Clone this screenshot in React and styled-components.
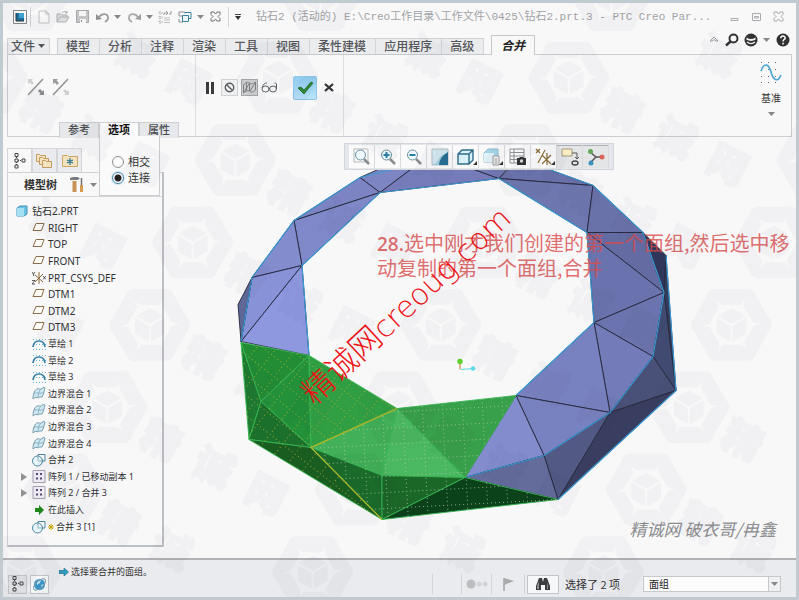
import React, { useState } from "react";
import styled, { createGlobalStyle, css } from "styled-components";

const Global = createGlobalStyle`
  * { box-sizing: border-box; }
  body { margin: 0; font-family: "Noto Sans CJK SC", "Noto Sans", sans-serif; font-size: 12px; color: #333; }
  button { font: inherit; color: inherit; margin: 0; padding: 0; border: 0; background: none; }
  svg { display: block; flex: none; }
`;

/* ---------- window frame ---------- */
const Frame = styled.div`
  position: relative;
  min-height: 100vh;
  display: flex;
  flex-direction: column;
  border: 3px solid #c2cad1;
  background: #f8f8f9;
  overflow: hidden;
`;
const TitleBar = styled.header`
  display: flex;
  align-items: center;
  height: 27px;
  padding: 0 8px 0 10px;
`;
const IconButton = styled.button`
  display: flex;
  align-items: center;
  justify-content: center;
  width: ${(p) => p.$w || 19}px;
  height: 18px;
`;
const Separator = styled.span`
  width: 1px;
  height: ${(p) => p.$h || 20}px;
  margin: 0 3px;
  background: #d2d4d7;
`;
const Title = styled.h1`
  flex: 1;
  min-width: 0;
  margin: 0 0 0 13px;
  font: 11px/18px "Liberation Mono", "Noto Sans CJK SC", monospace;
  color: #a0a2a5;
  white-space: nowrap;
  overflow: hidden;
`;
const WindowButtons = styled.div`
  display: flex;
  gap: 3px;
`;

/* ---------- ribbon ---------- */
const TabRow = styled.nav`
  display: flex;
  align-items: flex-end;
  height: 25px;
  padding: 0 4px;
  position: relative;
  z-index: 1;
`;
const TabGroup = styled.div`
  display: flex;
  border: 1px solid #cfd1d4;
  border-right: 0;
  border-bottom-color: #c6c8cb;
  margin-right: 7px;
  height: 17px;
`;
const Tab = styled.button`
  display: flex;
  align-items: center;
  gap: 3px;
  padding: 0 9px 2px 8px;
  border-right: 1px solid #d3d5d8;
  background: #ebecee;
  color: #55575b;
  font-weight: 500;
  line-height: 13px;
  white-space: nowrap;
  ${(p) => p.$file && css`padding: 0 4px 2px 3px;`}
`;
const ActiveTab = styled.button`
  height: 20px;
  padding: 0 9px 2px;
  border: 1px solid #c6c8cb;
  border-bottom: 0;
  background: #f8f8f9;
  color: #222;
  font-weight: 700;
  font-style: italic;
  line-height: 17px;
`;
const HelpTools = styled.div`
  display: flex;
  align-items: center;
  gap: 1px;
  margin-left: auto;
  align-self: flex-start;
  height: 20px;
`;
const Ribbon = styled.section`
  display: grid;
  grid-template-columns: 188px 148px 1fr;
  height: 83px;
  margin: -1px 4px 0;
  border: 1px solid #cbcdd0;
`;
const Group = styled.div`
  display: flex;
  flex-direction: column;
  border-right: 1px solid ${(p) => (p.$last ? "transparent" : "#dcdee0")};
`;
const ToolRow = styled.div`
  display: flex;
  align-items: center;
  gap: ${(p) => p.$gap || 3}px;
  height: 65px;
  padding-left: ${(p) => p.$left}px;
`;
const SquareButton = styled.button`
  display: flex;
  align-items: center;
  justify-content: center;
  width: 17px;
  height: 17px;
  border: 1px solid ${(p) => (p.$on ? "#a5a7aa" : "#cfd1d3")};
  background: ${(p) => (p.$on ? "#d0d1d2" : "#eff0f1")};
`;
const PlainButton = styled.button`
  display: flex;
  align-items: center;
  justify-content: center;
  min-width: 17px;
  height: 20px;
`;
const OkButton = styled.button`
  display: flex;
  align-items: center;
  justify-content: center;
  width: 24px;
  height: 24px;
  margin-left: 12px;
  border: 1px solid #8fc6ea;
  border-radius: 2px;
  background: linear-gradient(#8fcdf0, #b9e3fa);
`;
const PanelTabs = styled.div`
  display: flex;
  height: 16px;
  margin-left: 51px;
`;
const PanelTabBox = styled.div`
  position: relative;
  width: 40px;
`;
const PanelTab = styled.button`
  width: 100%;
  height: 16px;
  border: 1px solid #cdcfd2;
  border-bottom: 0;
  background: ${(p) => (p.$on ? "#fbfbfc" : "#e6e8eb")};
  color: ${(p) => (p.$on ? "#111" : "#4c4e52")};
  font-size: 11px;
  font-weight: ${(p) => (p.$on ? 700 : 500)};
  line-height: 13px;
  padding-bottom: 2px;
`;
const OptionsPopup = styled.fieldset`
  position: absolute;
  z-index: 3;
  top: 100%;
  left: 0;
  display: grid;
  gap: 1px;
  width: 61px;
  min-width: 0;
  height: 60px;
  align-content: end;
  margin: 0;
  padding: 0 0 10px 12px;
  border: 1px solid #cbcdd0;
  border-top: 0;
  background: #fafafb;
`;
const Option = styled.label`
  display: flex;
  align-items: center;
  gap: 4px;
  font-size: 11px;
  line-height: 15px;
`;
const Radio = styled.input`
  appearance: none;
  width: 12px;
  height: 12px;
  margin: 0;
  border: 1px solid #8b8d90;
  border-radius: 50%;
  background: #fff;
  &:checked {
    border-color: #4d87ad;
    background: radial-gradient(#222 0 3px, #fff 4px);
    box-shadow: 0 0 2px #5ab0e0;
  }
`;
const DatumButton = styled.button`
  display: flex;
  flex-direction: column;
  align-items: center;
  gap: 5px;
  margin: 6px 8px 0 auto;
  font-size: 10px;
  line-height: 18px;
`;

/* ---------- work area ---------- */
const Main = styled.main`
  display: grid;
  grid-template-columns: 157px 1fr;
  flex: 1;
  margin-left: 4px;
`;
const SidePane = styled.aside`
  display: flex;
  flex-direction: column;
  padding: 11px 0 11px;
`;
const PaneTabs = styled.div`
  display: flex;
  height: 24px;
`;
const PaneTab = styled.button`
  display: flex;
  align-items: center;
  justify-content: center;
  width: 25px;
  border: 1px solid #d4d6d9;
  border-bottom: 0;
  background: ${(p) => (p.$on ? "#f8f8f9" : "#e9ebee")};
`;
const TreePane = styled.section`
  display: flex;
  flex-direction: column;
  flex: 1;
  border: 1px solid #cfd1d4;
  border-width: 1px 2px 2px 1px;
  border-right-color: #bcc1c6;
  border-bottom-color: #bcc1c6;
`;
const TreeHeader = styled.div`
  display: flex;
  align-items: center;
  height: 24px;
  padding-left: 16px;
  border-bottom: 1px solid #d4d6d9;
`;
const TreeTitle = styled.h2`
  margin: 0 11px 2px 0;
  font-size: 11px;
  font-weight: 700;
  line-height: 18px;
`;
const Tree = styled.ul`
  display: grid;
  grid-auto-rows: 1fr;
  flex: 1;
  max-height: 333px;
  margin: 6px 0 10px;
  padding: 0;
  list-style: none;
`;
const Node = styled.li`
  display: flex;
  align-items: center;
  gap: ${(p) => (p.$root ? 4 : 2)}px;
  padding-left: ${(p) => (p.$root ? 8 : p.$open ? 12 : 24)}px;
  font: ${(p) => (p.$cjk ? 9 : 10)}px/14px "Noto Sans", "Noto Sans CJK SC", sans-serif;
  color: #303234;
  white-space: nowrap;
`;
const Canvas = styled.section`
  position: relative;
  min-width: 0;
`;
const Scene = styled.svg`
  position: absolute;
  inset: 0;
  width: 100%;
  height: 100%;
`;
const ViewTools = styled.div`
  position: absolute;
  top: 6px;
  left: 180px;
  display: flex;
  padding: 1px 4px;
  border: 1px solid #d3d6da;
  background: #e3e6ea;
`;
const ViewTool = styled.button`
  position: relative;
  display: flex;
  align-items: center;
  justify-content: center;
  width: 26px;
  height: 23px;
  border-right: 1px solid #d8dadd;
  background: ${(p) => (p.$on ? "#e4e5e7" : "#fafafb")};
  box-shadow: ${(p) => (p.$on ? "inset 0 1px 0 #aeb0b3" : "none")};
`;
const MenuMark = styled.span`
  position: absolute;
  right: 1px;
  bottom: 3px;
  border: 2px solid #333;
  border-top-color: transparent;
  border-left-color: transparent;
`;
const Note = styled.p`
  position: absolute;
  top: 93px;
  left: 213px;
  margin: 0;
  font: 400 20px/25px "Noto Sans CJK SC", sans-serif;
  color: #d94a4acc;
  white-space: nowrap;
`;
const NoteNumber = styled.span`
  font: 600 19px/1 "Open Sans", sans-serif;
`;
const SiteMark = styled.p`
  position: absolute;
  top: 149px;
  left: 107px;
  margin: 0;
  font: 200 30px/40px "DejaVu Sans", "Noto Sans CJK SC", sans-serif;
  color: #f01014;
  white-space: nowrap;
  transform: rotate(-43deg);
`;
const SiteName = styled.span`
  font: 300 32px/1 "Noto Sans CJK SC", sans-serif;
`;
const Signature = styled.p`
  position: absolute;
  right: 20px;
  bottom: 17px;
  margin: 0;
  font: italic 17px/24px "Noto Sans CJK SC", sans-serif;
  color: #8c8d8f;
`;

/* ---------- status bar ---------- */
const StatusBar = styled.footer`
  display: grid;
  grid-template-columns: auto 1fr auto auto auto;
  align-items: end;
  height: 39px;
  padding: 0 15px 3px 5px;
  border-top: 2px solid #b0b2b5;
  background: #e9ebee;
`;
const StatusGroup = styled.div`
  display: flex;
  align-items: center;
  gap: 3px;
  height: 20px;
`;
const Indicators = styled(StatusGroup)`
  gap: 0;
`;
const Divided = styled(StatusGroup)`
  justify-content: center;
  width: ${(p) => p.$w}px;
  border-left: 1px solid #d2d4d7;
`;
const StatusButton = styled.button`
  display: flex;
  align-items: center;
  justify-content: center;
  width: ${(p) => p.$w || 19}px;
  height: 19px;
  border: 1px solid #c3c6c9;
  background: ${(p) => (p.$on ? "#dee0e3" : "#f6f7f8")};
`;
const Message = styled.p`
  display: flex;
  align-items: center;
  align-self: start;
  gap: 2px;
  margin: 4px 0 0 10px;
  font-size: 9px;
  line-height: 16px;
  white-space: nowrap;
`;
const Count = styled.span`
  width: 78px;
  margin-left: 5px;
  font-size: 11px;
  line-height: 20px;
  white-space: nowrap;
`;
const FilterBox = styled.div`
  position: relative;
  width: 138px;
  height: 18px;
`;
const Filter = styled.select`
  appearance: none;
  display: block;
  width: 100%;
  height: 16px;
  margin: 0;
  padding: 0 5px;
  border: 1px solid #c6c9cc;
  border-radius: 0;
  background: #fbfbfc;
  color: #222;
  font: 10px/14px "Noto Sans CJK SC", sans-serif;
`;
const FilterArrow = styled.span`
  position: absolute;
  top: 1px;
  right: 1px;
  display: flex;
  align-items: center;
  justify-content: center;
  width: 12px;
  height: 14px;
  border-left: 1px solid #c6c9cc;
  background: #eef0f2;
  pointer-events: none;
`;
const Backdrop = styled.svg`
  position: absolute;
  z-index: 5;
  inset: 0;
  width: 100%;
  height: 100%;
  pointer-events: none;
`;

/* ---------- icons ---------- */
const Svg = ({ w = 16, h = 16, children }) => (
  <svg width={w} height={h} viewBox={`0 0 ${w} ${h}`} fill="none" aria-hidden="true">{children}</svg>
);
const Caret = ({ c = "#85878a" }) => <Svg w={7} h={4}><path d="M0 0h7L3.500 4z" fill={c} /></Svg>;

const AppIcon = () => <Svg w={14} h={14}><path d="M.5.5h13v13H.5z" fill="#fafafa" stroke="#85888b" /><path d="M3 3h8v8H3z" fill="#1f6f9f" /><path d="M6 3h5v5H6z" fill="#42a5d3" /><path d="M3 11V3M3 11h8" stroke="#333" /></Svg>;
const NewIcon = () => <Svg w={12} h={14}><path d="M1 1h7l3 3v9H1zM8 1v3h3" fill="#fbfbfb" stroke="#bfc0c2" /></Svg>;
const OpenIcon = () => <Svg w={14} h={14}><path d="M1 12V4h4l1 1h5v2M1 12l3-5h9l-3 5z" fill="#dcdddf" stroke="#aeb0b2" /><path d="M6 3c2-2 4-2 5 0M11 1v2H9" stroke="#aaa" /></Svg>;
const SaveIcon = () => <Svg w={13} h={13}><path d="M.5.5h12v12H.5z" fill="#c3c5c7" stroke="#a6a8ab" /><path d="M3 1h7v5H3zM4 9h6v4H4z" fill="#f4f4f4" /><path d="M5 10h1v2H5z" fill="#888" /></Svg>;
const UndoIcon = () => <Svg w={14} h={12}><path d="M3 6c3-4 9-4 9 1 0 1-1 3-3 4" stroke="#9a9c9e" strokeWidth="1.800" /><path d="M0 3v6l6-1z" fill="#8f9194" /></Svg>;
const RedoIcon = () => <Svg w={14} h={12}><path d="M11 6C8 2 2 2 2 7c0 1 1 3 3 4" stroke="#a8aaac" strokeWidth="1.800" /><path d="M14 3v6l-6-1z" fill="#9c9ea0" /></Svg>;
const RegenIcon = () => <Svg w={14} h={14}><path d="M1 2h3v2H1zM1 6.500h3v2H1zM1 11h3v2H1z" stroke="#b6b8ba" strokeDasharray="2 1" /><path d="M6 8h6M6 10h6M6 12.500h6" stroke="#c0c1c3" /><path d="M6 5V3h3M8 1l2 2-2 2M13 1v3h-2" stroke="#9b9da0" /></Svg>;
const WindowsIcon = () => <Svg w={14} h={14}><path d="M1 2h6M1 2v4h3M1 9v3h4" stroke="#8d8f92" /><path d="M4.500 5.500h6v6h-6z" fill="#eef8fc" stroke="#3b7f9e" /><path d="M7 3.500v-1h6v6h-2" stroke="#3b7f9e" /></Svg>;
const CrossOutline = ({ c = "#707275" }) => <Svg w={11} h={11}><path d="M1 1h3l1.500 2L7 1h3v2.500l-2 2 2 2V10H7L5.500 8 4 10H1V7.500l2-2-2-2z" stroke={c} /></Svg>;
const MoreIcon = () => <Svg w={8} h={8}><path d="M1 1.500h6" stroke="#444" /><path d="M1 3h6L4 7z" fill="#333" /></Svg>;
const MinIcon = () => <Svg w={9} h={11}><path d="M1 7.500h7v2H1z" stroke="#aaacaf" /></Svg>;
const MaxIcon = () => <Svg w={9} h={9}><path d="M.5 1.500h8v7h-8zM2.500 4.500h4v1.500h-4z" stroke="#aaacaf" /></Svg>;

const ChevronUp = () => <Svg w={10} h={8}><path d="M1 5l4-4 4 4H7L5 3.500 3 5z" stroke="#a2a4a7" /></Svg>;
const SearchIcon = () => <Svg w={14} h={14}><circle cx="8.500" cy="5.500" r="4" stroke="#333" strokeWidth="2" /><path d="M5.500 8.500L1 12.500" stroke="#333" strokeWidth="2.500" /></Svg>;
const FaceIcon = () => <Svg w={14} h={14}><circle cx="7" cy="7" r="6.500" fill="#333" /><path d="M2.500 4.500c3 2 6 2 9 0v2.300c-3 1.500-6 1.500-9 0z" fill="#f2f2f2" /><path d="M3 9c2.500 2 5.500 2 8 0" stroke="#eee" strokeWidth="1.400" /></Svg>;
const HelpIcon = () => <Svg w={14} h={14}><circle cx="7" cy="7" r="6.500" fill="#303133" /><path d="M4.800 5.200c.2-3 4.600-2.600 4.400 0C9.100 6.500 7 6.500 7 8.500M7 9.800v1.600" stroke="#fff" strokeWidth="1.500" /></Svg>;

const FlipIcon = ({ flip }) => <Svg w={19} h={19}><path d="M1 17L16 1" stroke="#929497" strokeWidth="1.600" /><path d="M1 1h5L4.600 2.600 7 5 5 7 2.600 4.600 1 6z" fill={flip ? "#9a9c9e" : "#cfd0d2"} /><path d="M17 17h-5l1.500-1.500L11 13l2-2 2.500 2.500L17 12z" fill={flip ? "#d0d1d3" : "#8a8c8e"} /></Svg>;
const PauseIcon = () => <Svg w={10} h={12}><path d="M1 0h3v12H1zM6 0h3v12H6z" fill="#3a3b3d" /></Svg>;
const BanIcon = () => <Svg w={11} h={11}><circle cx="5.500" cy="5.500" r="4.200" stroke="#5c5e61" strokeWidth="1.400" /><path d="M2.500 2.500l6 6" stroke="#5c5e61" strokeWidth="1.400" /></Svg>;
const MeshIcon = () => <Svg w={15} h={15}><path d="M1.500 5c2-3 4-3 6-2v8c-2-1-4 0-6 2zM7.500 3c2 2 4 0 6-1v8c-2 2-4 3-6 1M2 12L7 4M8 11l5-8M4.500 3v7" stroke="#77797c" strokeWidth=".9" /></Svg>;
const GlassesIcon = () => <Svg w={17} h={11}><ellipse cx="4.500" cy="7" rx="3.500" ry="3" stroke="#5b6264" /><ellipse cx="12" cy="7" rx="3.500" ry="3" stroke="#5b6264" /><path d="M1 6C2 2 4 1 6 1M8 7h1M15.500 7V2c0-1-2-1-2-1" stroke="#5b6264" /></Svg>;
const CheckIcon = () => <Svg w={17} h={13}><path d="M1 7l3-1 3 3 7-8 2 1-9 11z" fill="#2f8a35" stroke="#1d5f28" strokeWidth=".7" /></Svg>;
const CloseBold = () => <Svg w={10} h={9}><path d="M1 1l8 7M9 1L1 8" stroke="#333" strokeWidth="2.300" /></Svg>;
const DatumIcon = () => <Svg w={22} h={23}><path d="M1 1.500h21M1 8.500h21M1 15.500h21M1 21.500h21" stroke="#63656a" strokeDasharray="1 6" /><path d="M1 10C4 1 9 3 11 11s7 11 10 3" stroke="#4ba4d4" strokeWidth="1.600" /></Svg>;

const TreeIcon = ({ c = "#444" }) => <Svg w={12} h={16}><path d="M1 .5h3v3H1zM1 6h3v3H1zM1 12h3v3H1zM8 6h3v3H8z" stroke={c} /><path d="M2.500 4v2M2.500 9v3M4 7.500h4" stroke={c} strokeDasharray="1 1" /></Svg>;
const FoldersIcon = () => <Svg w={17} h={16}>{[[0, 0], [3, 3], [6, 6]].map(([x, y]) => <path key={x} transform={`translate(${x} ${y})`} d="M.5 1.500h3l1 1h5v6h-9z" fill="#f4e3bd" stroke="#c39b5e" />)}</Svg>;
const FavIcon = () => <Svg w={16} h={13}><path d="M.5 1.500h5l1 1h9v10H.5z" fill="#f4e3bd" stroke="#cda66a" /><path d="M8 4v7M5 6l6 3M11 6L5 9" stroke="#2d7793" strokeWidth="1.300" /></Svg>;
const HammerIcon = () => <Svg w={15} h={17}><path d="M1 4V2l3-1h5l2 2-3 1z" fill="#777a7d" /><path d="M3.500 5h4v11h-4z" fill="#c89455" /><path d="M11 9h3v7h-3z" fill="#d59b4f" /><path d="M12.500 2v7" stroke="#6f7275" strokeWidth="1.500" /></Svg>;

const PartIcon = () => <Svg w={12} h={12}><path d="M1 3l3-2h7v8l-3 2H1z" fill="#6cc4e2" stroke="#3c93b5" /><path d="M1 3h7v8H1z" fill="#a6e1f3" /></Svg>;
const PlaneIcon = () => <Svg w={14} h={12}><path d="M4 1.500h8L9.500 8.500H1z" fill="#fffdf8" stroke="#8a6d48" /></Svg>;
const CsysIcon = () => <Svg w={14} h={14}><path d="M7 1v12M3 11L11 3M3 4l8 7" stroke="#8a6a3a" /><path d="M0 1l1.500 2L3 1M1.500 3v2M0 9.500h3l-3 3.500h3M11 5l3 3.500M14 5l-3 3.500" stroke="#333" strokeWidth=".8" /></Svg>;
const SketchIcon = () => <Svg w={14} h={13}><path d="M1 1.500h13M1 6.500h13M1 11.500h13" stroke="#6eb0cf" strokeDasharray="1 2" /><path d="M1 9c1-8 11-8 12 0" stroke="#327fa4" strokeWidth="1.700" /></Svg>;
const BlendIcon = () => <Svg w={14} h={13}><path d="M1 12C1 6 3 3 5 2c2-1 3 1 4 0 1-1 3-2 4-1-1 3-1 6-3 9-2 0-3 0-4 1-1-1-3-1-5 1z" fill="#cfe9f4" stroke="#7c9dac" /><path d="M9 2C7 4 6 7 6 11M2 7c3-3 6 1 10-2" stroke="#8fb1c0" /></Svg>;
const MergeIcon = () => <Svg w={14} h={14}><path d="M6 5V1.500h7V8H9.500" stroke="#4c88a3" /><circle cx="5.500" cy="8" r="5" fill="#dff1f8" fillOpacity=".6" stroke="#4c88a3" /><path d="M6 4v4h4" stroke="#8db7c8" /></Svg>;
const PatternIcon = () => <Svg w={14} h={14}><path d="M1 .5h12v12H1z" fill="#f3f0f8" stroke="#aaa3b5" /><path d="M4 3h2v2H4zM8 3h2v2H8zM4 7.500h2v2H4zM8 7.500h2v2H8z" fill="#5a4a78" /></Svg>;
const InsertIcon = () => <Svg w={14} h={12}><path d="M3 4h4V1l5 5-5 5V8H3z" fill="#1f8a1b" /></Svg>;
const SparkIcon = () => <Svg w={6} h={8}><path d="M3 1v6M0 4h6M1 2l4 4M5 2L1 6" stroke="#c2a500" /></Svg>;
const Expander = () => <Svg w={10} h={8}><path d="M1 0l6 4-6 4z" fill="#8e9093" /></Svg>;

const Lens = ({ children }) => <><circle cx="7.500" cy="7" r="5" fill="#eef9fd" stroke="#6b8f9e" /><path d="M11 11l5 5" stroke="#8a8d90" strokeWidth="2.500" />{children}</>;
const FitIcon = () => <Svg w={18} h={18}><path d="M1 1h14v13H1z" stroke="#b4b7ba" /><Lens /></Svg>;
const ZoomInIcon = () => <Svg w={18} h={18}><Lens><path d="M4.500 7h6M7.500 4v6" stroke="#2b7fa6" strokeWidth="2" /></Lens></Svg>;
const ZoomOutIcon = () => <Svg w={18} h={18}><Lens><path d="M4.500 7h6" stroke="#2b7fa6" strokeWidth="2" /></Lens></Svg>;
const RepaintIcon = () => <Svg w={18} h={18}><path d="M1 1h16v16H1z" fill="#d3e8f0" stroke="#b3c0c6" /><path d="M17 4v13H7c0-7 4-9 10-13z" fill="#286f93" /><path d="M1 17c7-1 6-10 15-12-4 2-7 5-8 12z" fill="#9fcfe0" /></Svg>;
const BoxIcon = () => <Svg w={18} h={18}><path d="M1 6l4-4h11v10l-4 4H1zM1 6h11v10M12 6l4-4" fill="#d8f0f8" stroke="#2e6c89" strokeWidth="1.400" /></Svg>;
const ViewsIcon = () => <Svg w={18} h={18}><path d="M1 5l4-4h10v9l-4 4H1z" fill="#a3d7e9" stroke="#90bccc" /><path d="M1 5h10v9H1z" fill="#e3f4fa" /><path d="M10 8h6v9h-6z" fill="#fafafa" stroke="#999" /><path d="M11.500 11h3M11.500 13h3M11.500 15h3" stroke="#999" /></Svg>;
const TableCamIcon = () => <Svg w={18} h={18}><path d="M1 1h14v14H1zM1 4.500h14M1 8h14M1 11.500h14M5 1v14" stroke="#909295" /><path d="M8 10h2l1-1h3l1 1h2v7H8z" fill="#333" /><circle cx="12.500" cy="13" r="1.700" fill="#ddd" /></Svg>;
const DatumShowIcon = () => <Svg w={18} h={18}><path d="M1 1l4 4M5 1L1 5M3 15L10 2M12 5v12M7 16l9-9M7 7l9 9" stroke="#8a6b38" strokeWidth="1.200" /></Svg>;
const AnnotIcon = () => <Svg w={18} h={18}><path d="M1 1h10v7H1z" fill="#faedc5" stroke="#a59878" /><path d="M11 5h5v6M14 9l2 2 2-2" stroke="#555" /><ellipse cx="14" cy="15" rx="3" ry="2" stroke="#444" strokeWidth="1.300" /></Svg>;
const SpinIcon = () => <Svg w={18} h={18}><path d="M3 4l6 5h6M9 9l-5 5" stroke="#555" strokeWidth="1.500" /><circle cx="3.500" cy="3.500" r="2.500" fill="#64a857" /><circle cx="15" cy="9" r="2.500" fill="#d9635a" /><circle cx="4" cy="15" r="2.500" fill="#3c93b9" /></Svg>;

const ArrowIcon = () => <Svg w={10} h={10}><path d="M0 3.500h5V1l4.500 4L5 9V6.500H0z" fill="#2f9bc1" stroke="#1c6785" strokeWidth=".6" /></Svg>;
const GlobeIcon = () => <Svg w={15} h={15}><circle cx="7.500" cy="7.500" r="5.500" fill="#3a97cb" /><path d="M5 4l4-1-1 3-3 2zM9 8l3-1-2 4z" fill="#bfe3f3" /><ellipse cx="7.500" cy="7.500" rx="7.500" ry="3.500" transform="rotate(-42 7.500 7.500)" stroke="#7896a4" /></Svg>;
const BinocularsIcon = () => <Svg w={16} h={14}><path d="M4 1h3l1 4 1-4h3l3 8v4h-5V8H6v5H1V9z" fill="#3c3d3f" /><path d="M2 9l2-5v8H2zM12 5l1 4v3h-1z" fill="#8d9093" /></Svg>;
const DotsIcon = () => <Svg w={22} h={10}><circle cx="5" cy="5" r="4.500" fill="#bcbec0" /><circle cx="13" cy="5" r="2.500" fill="#d3d4d6" /><circle cx="19" cy="5" r="2.500" fill="#d3d4d6" /></Svg>;
const FlagIcon = () => <Svg w={11} h={13}><path d="M1 0v13" stroke="#a2a4a6" strokeWidth="1.500" /><path d="M1 0l10 3-10 4z" fill="#a9abad" /></Svg>;

/* ---------- model geometry ---------- */
const blueFaces = [
  ["360,178 378,170 420,163 380,193", "#7d85c2"],
  ["380,193 420,163 474,170 499,179", "#757cb9"],
  ["474,170 420,163 510,166 499,179", "#7178b3"],
  ["499,179 510,168 549,170 593,186", "#6b72ab"],
  ["499,179 593,186 587,233", "#6f77b0"],
  ["593,186 643,233 587,233", "#6a72aa"],
  ["360,178 380,193 294,221", "#7c84c4"],
  ["294,221 380,193 302,266", "#7f88c9"],
  ["294,221 302,266 252,278", "#838dce"],
  ["252,278 302,266 241,342", "#8892d6"],
  ["302,266 309,356 241,342", "#8e98df"],
  ["252,278 238,305 241,342", "#5e6796"],
  ["587,233 643,233 664,293", "#636ba2"],
  ["587,233 664,293 594,323", "#6b73ae"],
  ["594,323 664,293 653,357", "#6c74af"],
  ["594,323 653,357 610,413", "#737bb8"],
  ["516,396 594,323 610,413", "#7982c0"],
  ["516,396 610,413 544,456", "#7982c0"],
  ["516,396 544,456 465,478", "#838ccd"],
  ["643,233 666,256 664,293", "#30365a"],
  ["664,293 666,256 676,391", "#343c5b"],
  ["664,293 676,391 653,357", "#414a70"],
  ["653,357 676,391 610,413", "#4a5179"],
  ["610,413 676,391 558,500", "#393e60"],
  ["544,456 610,413 558,500", "#525985"],
  ["465,478 544,456 558,500", "#646c9c"],
];
const greenFaces = [
  ["241,343 261,402 249,440", "#1e7a31", "y"],
  ["241,343 309,356 261,402", "#228d35", "y"],
  ["309,356 311,448 261,402", "#22913a", "y"],
  ["261,402 311,448 249,440", "#1b702c", "y"],
  ["249,440 311,448 382,520", "#195e20", "y"],
  ["309,356 397,409 311,448", "#309f43", "y"],
  ["311,448 397,409 382,476", "#42b058", "w"],
  ["397,409 465,478 382,476", "#4ab761", "w"],
  ["397,409 516,396 465,478", "#389f4b", "w"],
  ["311,448 382,476 382,520", "#1b6c2a", "w"],
  ["382,476 465,478 382,520", "#1a6728", "w"],
  ["465,478 558,500 382,520", "#0c4219", "w"],
];

const Model = () => (
  <Scene viewBox="164 138 632 420" role="img" aria-label="Model">
    <defs>
      <pattern id="y" width="16" height="16" patternUnits="userSpaceOnUse" patternTransform="rotate(38)">
        <path d="M0 .5h16M.5 0v16" stroke="#c4b62e" strokeDasharray="1 3" fill="none" />
      </pattern>
      <pattern id="w" width="20" height="16" patternUnits="userSpaceOnUse" patternTransform="rotate(-3)">
        <path d="M0 .5h20M.5 0v16" stroke="#bccdae" strokeDasharray="1 3" fill="none" />
      </pattern>
    </defs>
    {blueFaces.map(([pts, fill]) => <polygon key={pts} points={pts} fill={fill} stroke="#25273c" strokeWidth=".9" />)}
    <g fill="none" stroke="#3a9ad4" strokeWidth="1.200">
      <path d="M549 170L593 186 643 233 664 293 653 357 610 413 544 456 465 478" />
      <path d="M420 163L360 178 294 221 252 278 241 342M309 356L302 266 380 193 499 179 587 233 594 323 516 396" />
      <path d="M666 256L676 391 558 500" />
    </g>
    {greenFaces.map(([pts, fill, grid]) => (
      <g key={pts}>
        <polygon points={pts} fill={fill} stroke="#37b552" strokeWidth=".9" />
        <polygon points={pts} fill={`url(#${grid})`} opacity=".75" />
      </g>
    ))}
    <path d="M397 409L311 448 382 520" fill="none" stroke="#a5b52e" strokeWidth="1.400" />
    <path d="M460 363v7" stroke="#c07b2d" />
    <path d="M461 370l12-1" stroke="#55dbe9" />
    <circle cx="460" cy="362" r="2.700" fill="#5fd32b" />
    <circle cx="473" cy="369" r="2.200" fill="#58dcec" />
  </Scene>
);

const marks = [-1, 0, 1, 2].flatMap((col) =>
  [-4, -3, -2, -1, 0, 1, 2, 3].map((row) => [148 + col * 293 - row * 43, 325 + row * 83])
);
const glyphs = marks.flatMap(([x, y]) =>
  ["精", "诚", "网"].map((g, i) => [g, x + 54 + i * 53, y + 34 + i * 27])
).filter(([, x, y]) => x > 34 && x < 760 && y > 34 && y < 564);

const Marks = () => (
  <Backdrop viewBox="0 0 799 600" preserveAspectRatio="xMidYMid slice" aria-hidden="true">
    <g fill="#30353c" opacity=".035">
      {marks.map(([x, y]) => (
        <g key={`${x},${y}`} transform={`translate(${x} ${y})`}>
          {[0, 60, 120, 180, 240, 300].map((a) => (
            <polygon key={a} transform={`rotate(${a})`} points="-19,-36 20,-36 9,-20 -10,-20 -25,-31" />
          ))}
          <path d="M0-17l14 8L0-1-14-9zM-15-7L-1 1v16l-14-8zM15-7L1 1v16l14-8z" />
        </g>
      ))}
      {glyphs.map(([g, x, y]) => (
        <text
          key={`${x},${y}`}
          transform={`translate(${x} ${y}) rotate(27)`}
          y="14"
          textAnchor="middle"
          fontSize="40"
          fontWeight="900"
          fontFamily="Noto Sans CJK SC"
          stroke="#30353c"
          strokeWidth="2"
        >{g}</text>
      ))}
    </g>
  </Backdrop>
);

const menus = ["模型", "分析", "注释", "渲染", "工具", "视图", "柔性建模", "应用程序", "高级"];
const nodes = [
  ["RIGHT", PlaneIcon], ["TOP", PlaneIcon], ["FRONT", PlaneIcon], ["PRT_CSYS_DEF", CsysIcon],
  ["DTM1", PlaneIcon], ["DTM2", PlaneIcon], ["DTM3", PlaneIcon],
  ["草绘 1", SketchIcon], ["草绘 2", SketchIcon], ["草绘 3", SketchIcon],
  ["边界混合 1", BlendIcon], ["边界混合 2", BlendIcon], ["边界混合 3", BlendIcon], ["边界混合 4", BlendIcon],
  ["合并 2", MergeIcon], ["阵列 1 / 已移动副本 1", PatternIcon, "open"], ["阵列 2 / 合并 3", PatternIcon, "open"],
  ["在此插入", InsertIcon], ["合并 3 [1]", MergeIcon, "new"],
];
const viewTools = [
  { name: "重新调整", Icon: FitIcon },
  { name: "放大", Icon: ZoomInIcon },
  { name: "缩小", Icon: ZoomOutIcon },
  { name: "重画", Icon: RepaintIcon },
  { name: "显示样式", Icon: BoxIcon, menu: true },
  { name: "已保存方向", Icon: ViewsIcon, menu: true },
  { name: "视图管理器", Icon: TableCamIcon },
  { name: "基准显示", Icon: DatumShowIcon, menu: true },
  { name: "注释显示", Icon: AnnotIcon, on: true },
  { name: "旋转中心", Icon: SpinIcon, on: true },
];
const quick = [
  ["新建", NewIcon, 19], ["打开", OpenIcon, 19], ["保存", SaveIcon, 21], ["撤消", UndoIcon, 19], ["撤消列表", Caret, 11],
  ["重做", RedoIcon, 21], ["重做列表", Caret, 11], ["重新生成", RegenIcon, 19], ["窗口", WindowsIcon, 21], ["窗口列表", Caret, 11], ["关闭", CrossOutline, 19],
];

export default function App() {
  const [mode, setMode] = useState("连接");
  return (
    <Frame>
      <Global />
      <TitleBar>
        <IconButton $w={14} aria-label="Creo"><AppIcon /></IconButton>
        <Separator />
        {quick.map(([name, Icon, w]) => <IconButton key={name} $w={w} aria-label={name}><Icon /></IconButton>)}
        <Separator />
        <IconButton $w={11} aria-label="自定义"><MoreIcon /></IconButton>
        <Title>钻石2 (活动的) E:\Creo工作目录\工作文件\0425\钻石2.prt.3 - PTC Creo Par...</Title>
        <WindowButtons>
          <IconButton aria-label="最小化"><MinIcon /></IconButton>
          <IconButton aria-label="最大化"><MaxIcon /></IconButton>
          <IconButton aria-label="关闭窗口"><CrossOutline c="#aaacaf" /></IconButton>
        </WindowButtons>
      </TitleBar>

      <TabRow>
        <TabGroup><Tab $file>文件<Caret c="#55575b" /></Tab></TabGroup>
        <TabGroup>{menus.map((m) => <Tab key={m}>{m}</Tab>)}</TabGroup>
        <ActiveTab>合并</ActiveTab>
        <HelpTools>
          <IconButton $w={17} aria-label="折叠"><ChevronUp /></IconButton>
          <IconButton $w={17} aria-label="搜索"><SearchIcon /></IconButton>
          <IconButton aria-label="社区"><FaceIcon /></IconButton>
          <IconButton $w={11} aria-label="更多"><Caret /></IconButton>
          <IconButton aria-label="帮助"><HelpIcon /></IconButton>
        </HelpTools>
      </TabRow>

      <Ribbon>
        <Group>
          <ToolRow $left={19} $gap={6}>
            <PlainButton aria-label="反向一"><FlipIcon /></PlainButton>
            <PlainButton aria-label="反向二"><FlipIcon flip /></PlainButton>
          </ToolRow>
          <PanelTabs>
            <PanelTabBox><PanelTab>参考</PanelTab></PanelTabBox>
            <PanelTabBox>
              <PanelTab $on>选项</PanelTab>
              <OptionsPopup aria-label="选项">
                {["相交", "连接"].map((o) => (
                  <Option key={o}>
                    <Radio type="radio" name="mode" checked={mode === o} onChange={() => setMode(o)} />
                    {o}
                  </Option>
                ))}
              </OptionsPopup>
            </PanelTabBox>
            <PanelTabBox><PanelTab>属性</PanelTab></PanelTabBox>
          </PanelTabs>
        </Group>
        <Group>
          <ToolRow $left={5}>
            <PlainButton aria-label="暂停"><PauseIcon /></PlainButton>
            <SquareButton aria-label="无预览"><BanIcon /></SquareButton>
            <SquareButton $on aria-label="几何预览"><MeshIcon /></SquareButton>
            <PlainButton aria-label="预览"><GlassesIcon /></PlainButton>
            <OkButton aria-label="确定"><CheckIcon /></OkButton>
            <PlainButton aria-label="取消"><CloseBold /></PlainButton>
          </ToolRow>
        </Group>
        <Group $last>
          <DatumButton><DatumIcon /><span>基准</span><Caret /></DatumButton>
        </Group>
      </Ribbon>

      <Main>
        <SidePane>
          <PaneTabs>
            <PaneTab $on aria-label="模型树"><TreeIcon /></PaneTab>
            <PaneTab aria-label="文件夹浏览器"><FoldersIcon /></PaneTab>
            <PaneTab aria-label="收藏夹"><FavIcon /></PaneTab>
          </PaneTabs>
          <TreePane>
            <TreeHeader>
              <TreeTitle>模型树</TreeTitle>
              <IconButton $w={17} aria-label="设置"><HammerIcon /></IconButton>
              <IconButton $w={17} aria-label="设置列表"><Caret /></IconButton>
            </TreeHeader>
            <Tree>
              <Node $root><PartIcon />钻石2.PRT</Node>
              {nodes.map(([name, Icon, kind]) => (
                <Node key={name} $open={kind === "open"} $cjk={/[^\x00-\x7f]/.test(name)}>
                  {kind === "open" && <Expander />}
                  <Icon />
                  {kind === "new" && <SparkIcon />}
                  <span>{name}</span>
                </Node>
              ))}
            </Tree>
          </TreePane>
        </SidePane>
        <Canvas>
          <Model />
          <ViewTools>
            {viewTools.map(({ name, Icon, on, menu }) => (
              <ViewTool key={name} $on={on} aria-label={name}><Icon />{menu && <MenuMark />}</ViewTool>
            ))}
          </ViewTools>
          <Note><NoteNumber>28.</NoteNumber>选中刚才我们创建的第一个面组,然后选中移<br />动复制的第一个面组,合并</Note>
          <SiteMark><SiteName>精诚网</SiteName>creoug.com</SiteMark>
          <Signature>精诚网 破衣哥/冉鑫</Signature>
        </Canvas>
      </Main>

      <StatusBar>
        <StatusGroup>
          <StatusButton $on aria-label="导航器"><TreeIcon /></StatusButton>
          <StatusButton aria-label="浏览器"><GlobeIcon /></StatusButton>
        </StatusGroup>
        <Message><ArrowIcon />选择要合并的面组。</Message>
        <Indicators>
          <Divided $w={29} />
          <Divided $w={30}><DotsIcon /></Divided>
          <Divided $w={33}><FlagIcon /></Divided>
          <Divided $w={36}><StatusButton $w={32} aria-label="查找"><BinocularsIcon /></StatusButton></Divided>
        </Indicators>
        <Count>选择了 2 项</Count>
        <FilterBox>
          <Filter aria-label="过滤器" defaultValue="面组"><option>面组</option></Filter>
          <FilterArrow><Caret /></FilterArrow>
        </FilterBox>
      </StatusBar>
      <Marks />
    </Frame>
  );
}
